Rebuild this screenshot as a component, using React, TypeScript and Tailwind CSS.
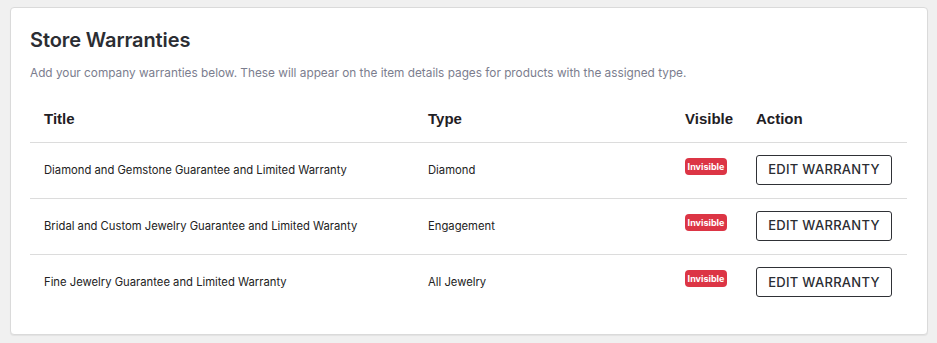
const rows = [
  { title: "Diamond and Gemstone Guarantee and Limited Warranty", type: "Diamond" },
  { title: "Bridal and Custom Jewelry Guarantee and Limited Waranty", type: "Engagement" },
  { title: "Fine Jewelry Guarantee and Limited Warranty", type: "All Jewelry" },
];

export default function App() {
  return (
    <div className="min-h-screen w-full bg-[#f0f0f0] pt-[7px] pl-[10px] font-['Inter',sans-serif]">
      <div className="w-[918px] h-[328px] bg-white border border-[#dadada] rounded-[4px] shadow-[0_1px_1px_rgba(0,0,0,0.06)] pl-[19px] pr-[20px] pt-[20px]">
        <h2 className="text-[20px] leading-[24px] font-semibold text-[#2b2d33] tracking-[-0.1px]">Store Warranties</h2>
        <p className="mt-[13px] text-[11.8px] leading-[16px] text-[#7b7d8e]">
          Add your company warranties below. These will appear on the item details pages for products with the assigned type.
        </p>
        <table className="mt-[15px] w-full border-collapse text-left">
          <colgroup>
            <col className="w-[384px]" />
            <col className="w-[257px]" />
            <col className="w-[71px]" />
            <col />
          </colgroup>
          <thead>
            <tr className="h-[46px] border-b border-[#dcdcdc] text-[15px] font-bold text-[#1f2024] font-['Liberation_Sans',sans-serif]">
              <th className="pl-[14px] font-bold">Title</th>
              <th className="pl-[14px] font-bold">Type</th>
              <th className="pl-[14px] font-bold">Visible</th>
              <th className="pl-[14px] font-bold">Action</th>
            </tr>
          </thead>
          <tbody>
            {rows.map((r, i) => (
              <tr key={r.title} className={"h-[56px] text-[11.25px] text-[#222] " + (i < rows.length - 1 ? "border-b border-[#dcdcdc]" : "")}>
                <td className="pl-[14px]">{r.title}</td>
                <td className="pl-[14px]">{r.type}</td>
                <td className="pl-[14px] align-top pt-[15px]">
                  <span className="inline-flex items-center justify-center w-[42px] h-[17px] rounded-[4px] bg-[#dc3545] text-white text-[9px] font-bold leading-none">
                    Invisible
                  </span>
                </td>
                <td className="pl-[14px]">
                  <button className="w-[136px] h-[30px] border border-[#2f3136] rounded-[3px] bg-white text-[13px] font-medium tracking-[0.3px] text-[#2b2d33]">
                    EDIT WARRANTY
                  </button>
                </td>
              </tr>
            ))}
          </tbody>
        </table>
      </div>
    </div>
  );
}
